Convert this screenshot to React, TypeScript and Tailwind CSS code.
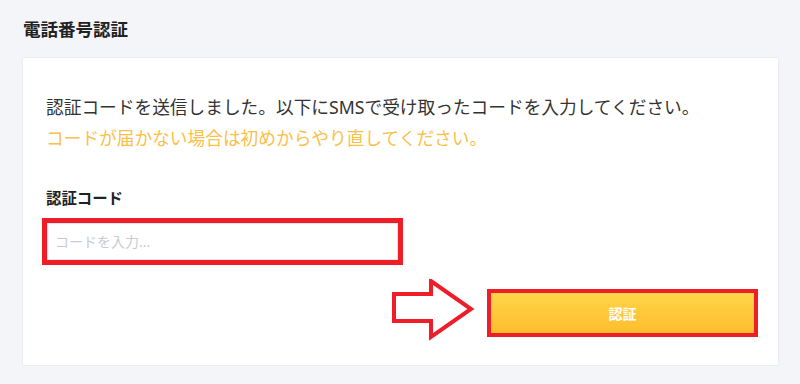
import React from "react";

export default function App() {
  return (
    <div
      className="w-[800px] h-[384px] bg-[#f4f5f9] overflow-hidden"
      style={{ fontFamily: '"Noto Sans", "Noto Sans CJK JP", sans-serif' }}
    >
      <div className="pl-[23px] pt-[16px] h-[58px]">
        <h1 className="text-[17.5px] leading-[26px] font-bold text-[#222]">電話番号認証</h1>
      </div>
      <div className="ml-[23px] w-[755px] h-[307px] bg-white shadow-[0_0_2px_rgba(0,0,0,0.1)] pl-[23px] pr-[20px] pt-[34px]">
        <p className="text-[17.7px] leading-[31px] text-[#333] whitespace-nowrap">
          認証コードを送信しました。以下にSMSで受け取ったコードを入力してください。
        </p>
        <p className="text-[17.7px] leading-[31px] text-[#fbc04a]">
          コードが届かない場合は初めからやり直してください。
        </p>
        <div className="mt-[34px] text-[15.4px] leading-[22px] font-bold text-[#222]">認証コード</div>
        <div className="mt-[8px] -ml-[4px] w-[361px] h-[47px] border-[5px] border-[#ee1d27]">
          <input
            className="w-full h-full border border-[#e4e6ea] px-[7px] text-[14px] text-[#333] placeholder:text-[#c7ccd3] outline-none"
            placeholder="コードを入力..."
          />
        </div>
        <div className="mt-[20px] flex items-center justify-end">
          <svg width="84" height="62" viewBox="0 0 84 62" className="mr-[12px] -mt-[6px]">
            <polygon
              points="3,15 40,15 40,2 80,30 40,58 40,42 3,42"
              fill="white"
              stroke="#ee1d27"
              strokeWidth="4"
              strokeLinejoin="miter"
            />
          </svg>
          <div className="w-[271px] h-[48px] border-[4px] border-[#ee1d27]">
            <button className="w-full h-full bg-gradient-to-b from-[#ffd548] to-[#fdbd2c] text-white text-[14px] font-bold">
              認証
            </button>
          </div>
        </div>
      </div>
    </div>
  );
}
